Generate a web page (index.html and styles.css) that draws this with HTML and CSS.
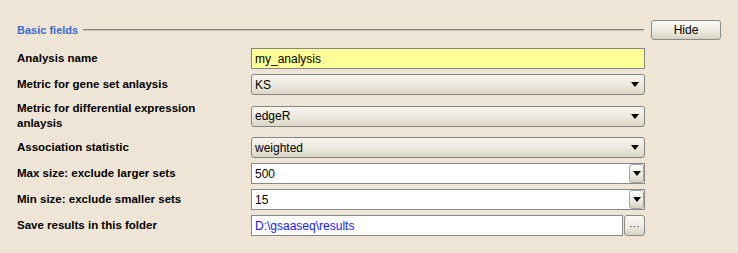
FILE: index.html
```html
<!DOCTYPE html>
<html lang="en">
<head>
    <meta charset="UTF-8">
    <title>Basic fields</title>
    <link rel="stylesheet" href="styles.css">
</head>
<body>
    <div class="panel">
        <div class="header">
            <span class="title">Basic fields</span>
            <span class="rule"></span>
            <button class="btn hide">Hide</button>
        </div>

        <div class="fields">
            <label class="label">Analysis name</label>
            <div class="input yellow">my_analysis</div>

            <label class="label">Metric for gene set anlaysis</label>
            <div class="select"><span class="value">KS</span><span class="arrow"></span></div>

            <label class="label two">Metric for differential expression anlaysis</label>
            <div class="select"><span class="value">edgeR</span><span class="arrow"></span></div>

            <label class="label">Association statistic</label>
            <div class="select"><span class="value">weighted</span><span class="arrow"></span></div>

            <label class="label">Max size: exclude larger sets</label>
            <div class="input combo"><span class="value">500</span><span class="drop"><span class="arrow"></span></span></div>

            <label class="label">Min size: exclude smaller sets</label>
            <div class="input combo"><span class="value">15</span><span class="drop"><span class="arrow"></span></span></div>

            <label class="label">Save results in this folder</label>
            <div class="browse">
                <div class="input path">D:\gsaaseq\results</div>
                <button class="btn dots">···</button>
            </div>
        </div>
    </div>
</body>
</html>
```

FILE: styles.css
```css
body {
    margin: 0;
    background: #eee5d6;
    font-family: "Liberation Sans", Arial, sans-serif;
    font-size: 12px;
    color: #000;
}
.panel {
    padding: 20px 0 0 17px;
    width: 704px;
}
.header {
    display: flex;
    align-items: center;
    height: 20px;
}
.title {
    color: #3b6bc8;
    font-weight: bold;
    font-size: 11px;
}
.rule {
    flex: 1;
    height: 0;
    border-top: 1px solid #808080;
    border-bottom: 1px solid #c9c1b3;
    margin: 0 7px 1px 5px;
}
.btn {
    font-family: "Liberation Sans", Arial, sans-serif;
    font-size: 12px;
    color: #000;
    border: 1px solid #8a8a8a;
    border-radius: 3px;
    background: linear-gradient(#fbfbf8, #ece9de 60%, #d6d1c2);
    padding: 0;
    box-sizing: border-box;
}
.hide {
    width: 70px;
    height: 20px;
}
.fields {
    display: grid;
    grid-template-columns: 234px 394px;
    row-gap: 5px;
    margin-top: 8px;
}
.label {
    font-weight: bold;
    font-size: 11.5px;
    display: flex;
    align-items: center;
    min-height: 21px;
    line-height: 15px;
}
.label.two {
    width: 200px;
    padding: 1px 0;
}
.input, .select {
    height: 21px;
    box-sizing: border-box;
    border: 1px solid #888;
    display: flex;
    align-items: center;
    padding-left: 3px;
    background: #fff;
    align-self: center;
}
.yellow {
    background: #ffff99;
}
.select {
    border-radius: 3px;
    background: linear-gradient(#f7f5ef, #ebe7db 55%, #dcd7c8);
    border-color: #858585;
}
.value {
    flex: 1;
}
.arrow {
    width: 0;
    height: 0;
    border-left: 4px solid transparent;
    border-right: 4px solid transparent;
    border-top: 5px solid #000;
    margin-right: 5px;
}
.combo {
    padding-right: 0;
}
.drop {
    width: 15px;
    height: 19px;
    box-sizing: border-box;
    border: 1px solid #a5a5a5;
    border-radius: 3px;
    background: linear-gradient(#fbfbf8, #ece9de 60%, #d6d1c2);
    display: flex;
    align-items: center;
    justify-content: center;
}
.drop .arrow {
    margin: 0;
}
.browse {
    display: flex;
    align-self: center;
    gap: 1px;
}
.path {
    flex: 1;
    color: #1a1ae6;
}
.dots {
    width: 21px;
    height: 21px;
    font-size: 11px;
    line-height: 10px;
    color: #333;
}
```
